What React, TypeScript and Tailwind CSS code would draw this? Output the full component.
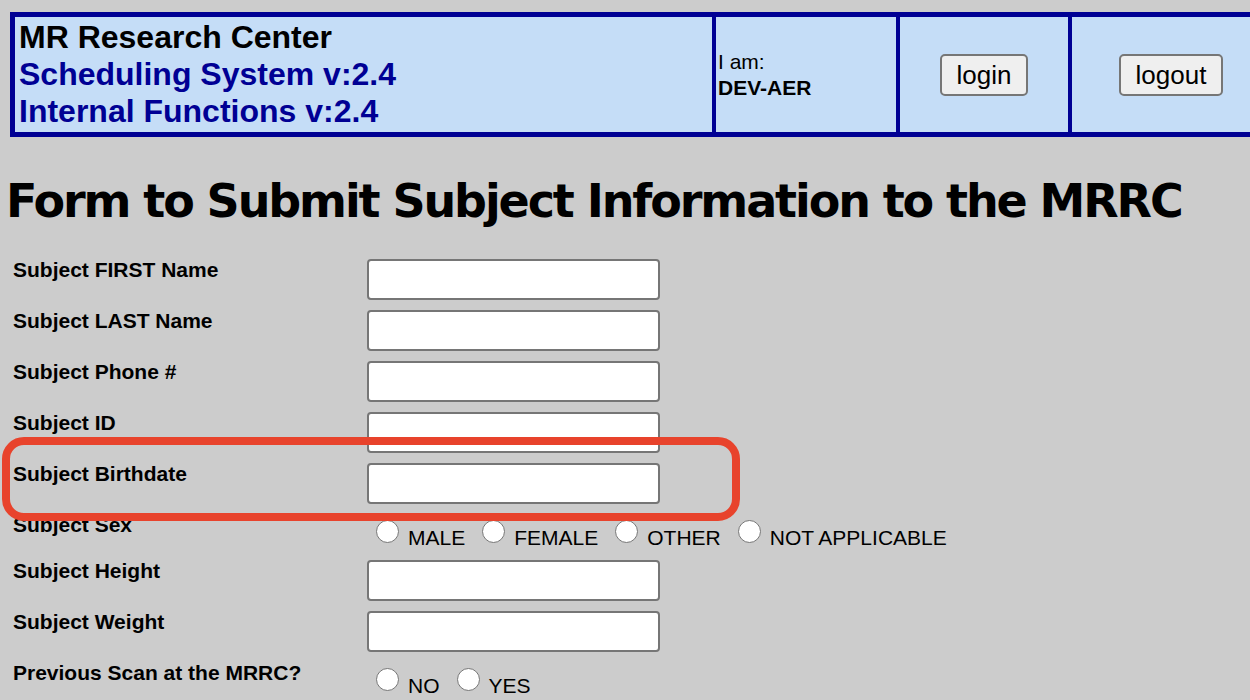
import React from "react";

function Radio({ first }: { first?: boolean }) {
  return (
    <span
      className={`inline-block w-[23px] h-[23px] rounded-full border border-[#767676] bg-white mb-[2px] mr-[9px] ${first ? "" : "ml-[17px]"}`}
    />
  );
}

function InputRow({ label }: { label: string }) {
  return (
    <div className="flex h-[51px]">
      <div className="w-[354px] text-[21px] leading-[24px] font-bold text-black">{label}</div>
      <div className="mt-[1px] w-[293px] h-[41px] rounded-[4px] border-2 border-[#767676] bg-white" />
    </div>
  );
}

export default function App() {
  return (
    <div className="relative w-[1250px] h-[700px] overflow-hidden bg-[#cccccc] font-['Liberation_Sans',Arial,sans-serif] text-black">
      <div className="pt-[12px] pl-[10px]">
        <div className="flex w-[1265px] h-[125px] border-[5px] border-[#000094] bg-[#c5ddf7]">
          <div className="w-[697px] px-[4px] flex flex-col justify-center text-[32px] font-bold leading-[37px]">
            <div className="text-black">MR Research Center</div>
            <div className="text-[#000094]">Scheduling System v:2.4</div>
            <div className="text-[#000094]">Internal Functions v:2.4</div>
          </div>
          <div className="w-[184px] border-l-[4px] border-[#000094] pl-[2px] flex flex-col justify-center text-[21px] leading-[26px]">
            <div>I am:</div>
            <div className="font-bold">DEV-AER</div>
          </div>
          <div className="w-[172px] border-l-[4px] border-[#000094] flex items-center justify-center">
            <button className="w-[88px] h-[42px] rounded-[5px] border-2 border-[#767676] bg-[#efefef] text-[26px] leading-[30px]">
              login
            </button>
          </div>
          <div className="w-[202px] border-l-[4px] border-[#000094] flex items-center justify-center">
            <button className="w-[104px] h-[42px] rounded-[5px] border-2 border-[#767676] bg-[#efefef] text-[26px] leading-[30px]">
              logout
            </button>
          </div>
        </div>
      </div>

      <h1 className="mt-[37px] ml-[6px] font-['DejaVu_Sans',Verdana,sans-serif] font-bold text-[46px] leading-[54px] tracking-[-2.1px] whitespace-nowrap">
        Form to Submit Subject Information to the MRRC
      </h1>

      <div className="mt-[30px] ml-[13px]">
        <InputRow label="Subject FIRST Name" />
        <InputRow label="Subject LAST Name" />
        <InputRow label="Subject Phone #" />
        <InputRow label="Subject ID" />
        <InputRow label="Subject Birthdate" />
        <div className="flex h-[46px]">
          <div className="w-[354px] text-[21px] leading-[24px] font-bold">Subject Sex</div>
          <div className="pl-[9px] pt-[7px] text-[21px] leading-[24px] whitespace-nowrap">
            <Radio first />MALE<Radio />FEMALE<Radio />OTHER<Radio />NOT APPLICABLE
          </div>
        </div>
        <InputRow label="Subject Height" />
        <InputRow label="Subject Weight" />
        <div className="flex h-[51px]">
          <div className="w-[354px] text-[21px] leading-[24px] font-bold">Previous Scan at the MRRC?</div>
          <div className="pl-[9px] pt-[7px] text-[21px] leading-[24px] whitespace-nowrap">
            <Radio first />NO<Radio />YES
          </div>
        </div>
      </div>

      <div className="absolute left-[2px] top-[437px] w-[738px] h-[84px] border-[8px] border-[#e8432c] rounded-[22px]" />
    </div>
  );
}
